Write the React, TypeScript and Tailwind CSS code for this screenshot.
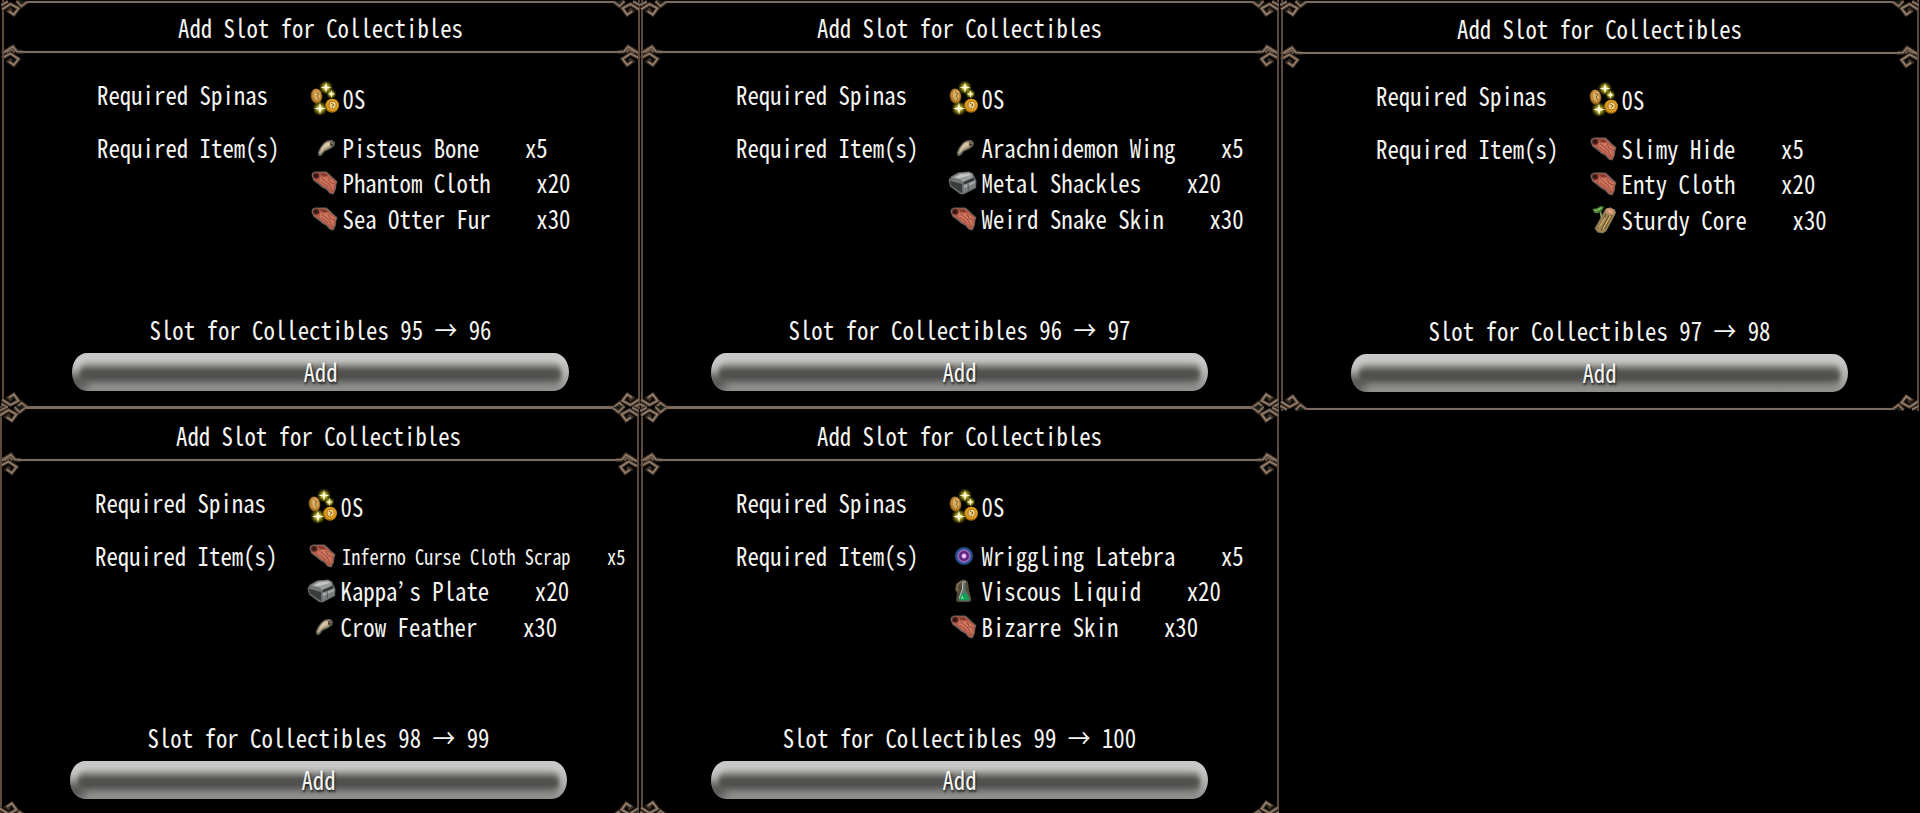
import type { ReactNode } from 'react';
import clsx from 'clsx';

type IconName = 'bone' | 'cloth' | 'metal' | 'wood' | 'orb' | 'flask';

interface RequiredItem {
  icon: IconName;
  name: string;
  count: number;
  small?: boolean;
}

interface SlotPanelData {
  from: number;
  items: RequiredItem[];
}

const topRow: SlotPanelData[] = [
  {
    from: 95,
    items: [
      { icon: 'bone', name: 'Pisteus Bone', count: 5 },
      { icon: 'cloth', name: 'Phantom Cloth', count: 20 },
      { icon: 'cloth', name: 'Sea Otter Fur', count: 30 },
    ],
  },
  {
    from: 96,
    items: [
      { icon: 'bone', name: 'Arachnidemon Wing', count: 5 },
      { icon: 'metal', name: 'Metal Shackles', count: 20 },
      { icon: 'cloth', name: 'Weird Snake Skin', count: 30 },
    ],
  },
  {
    from: 97,
    items: [
      { icon: 'cloth', name: 'Slimy Hide', count: 5 },
      { icon: 'cloth', name: 'Enty Cloth', count: 20 },
      { icon: 'wood', name: 'Sturdy Core', count: 30 },
    ],
  },
];

const bottomRow: SlotPanelData[] = [
  {
    from: 98,
    items: [
      { icon: 'cloth', name: 'Inferno Curse Cloth Scrap', count: 5, small: true },
      { icon: 'metal', name: 'Kappa’s Plate', count: 20 },
      { icon: 'bone', name: 'Crow Feather', count: 30 },
    ],
  },
  {
    from: 99,
    items: [
      { icon: 'orb', name: 'Wriggling Latebra', count: 5 },
      { icon: 'flask', name: 'Viscous Liquid', count: 20 },
      { icon: 'cloth', name: 'Bizarre Skin', count: 30 },
    ],
  },
];

function Label({ children, className }: { children: ReactNode; className?: string }) {
  return (
    <span className={clsx('inline-block -translate-y-[.5px] scale-y-[1.14] whitespace-pre', className)}>
      {children}
    </span>
  );
}

// The curly apostrophe is narrower than the other glyphs, so pad it to a full cell
function ItemName({ name }: { name: string }) {
  const [head, tail] = name.split('’');
  if (tail === undefined) return <>{name}</>;
  return (
    <>
      {head}
      <span className="tracking-[5.6px]">’</span>
      {tail}
    </>
  );
}

function Sparkle({ x, y, r }: { x: number; y: number; r: number }) {
  return (
    <g transform={`translate(${x} ${y}) scale(${r})`}>
      <circle r="1.05" fill="url(#spark)" />
      <path d="M0-.8 .16-.16 .8 0 .16 .16 0 .8-.16 .16-.8 0-.16-.16Z" fill="#fffde0" />
    </g>
  );
}

function CoinIcon() {
  return (
    <svg className="block h-[36px] w-[32px]" viewBox="0 0 32 36">
      <defs>
        <radialGradient id="spark">
          <stop offset="0" stopColor="#fff9a0" />
          <stop offset=".45" stopColor="#c9bd22" stopOpacity=".75" />
          <stop offset="1" stopColor="#6b6400" stopOpacity="0" />
        </radialGradient>
      </defs>
      <ellipse cx="7.5" cy="16" rx="5.8" ry="7.6" fill="#8f5f18" transform="rotate(-8 7.5 16)" />
      <ellipse cx="7.8" cy="15.5" rx="4.8" ry="6.6" fill="#c08a35" transform="rotate(-8 7.5 16)" />
      <ellipse cx="8.2" cy="15.2" rx="3" ry="4.6" fill="#d8b06a" transform="rotate(-8 7.5 16)" />
      <path d="M7 12l3 2-2 2 2 3" fill="none" stroke="#8a5c1c" strokeWidth="1" />
      <ellipse cx="23" cy="25.8" rx="7" ry="7" fill="#a86b0a" />
      <ellipse cx="23.4" cy="25" rx="6.2" ry="6.2" fill="#dc9d1e" />
      <ellipse cx="23.4" cy="25" rx="4.2" ry="4.4" fill="#b98228" />
      <ellipse cx="23.6" cy="25" rx="3" ry="3.2" fill="#ecd08a" />
      <path d="M22 23l3 2-2 2" fill="none" stroke="#8a5c1c" strokeWidth="1" />
      <Sparkle x={17} y={7.5} r={7} />
      <Sparkle x={22.4} y={14} r={5} />
      <Sparkle x={11} y={28.5} r={7.5} />
    </svg>
  );
}

function ItemIcon({ name }: { name: IconName }) {
  switch (name) {
    case 'bone':
      return (
        <svg className="ml-[8px] block h-[18px] w-[19px]" viewBox="0 0 19 18">
          <path d="M10 1.5 15 .8 18 3.2 17.4 7 13.5 10 8 12.5 4.5 16.8 1.4 17 .8 13.5 3 8.5 6.5 4Z" fill="#5a5b57" />
          <path d="M9.5 3 14 2 16.3 4 16 6.5 12.5 9 7 11.5 3 16 2 13.5 4 9 7 5Z" fill="#ac9a7b" />
          <path d="M10 3.5 13 3.4 13 6.5 7 9.5 3.5 14 5 9 7.5 5.5Z" fill="#d5c6a4" />
          <path d="M14 2.5 16.4 4.2 15.8 6.5 14 7.5 12.8 5Z" fill="#443b2d" />
          <path d="M14.2 4.2 16 4.6" stroke="#b5a482" strokeWidth=".8" />
        </svg>
      );
    case 'cloth':
      return (
        <svg className="ml-[2px] block h-[24px] w-[27px]" viewBox="0 0 27 24">
          <path d="M4 .5 15.5 .5 19 3.5 21.5 6 26.5 10.5 25.3 14 25 18 22.5 23.5 18.5 22.5 15 18.5 11 16.5 7 13 2.5 9.8 .5 5 1 2Z" fill="#67605b" />
          <path d="M4.5 1.5 15 1.6 18 4 20.8 7 25.5 11 24.3 14 24 18 22 22.4 19 21.4 16 17.8 12 15.6 8 12 3.5 8.9 1.6 5 2 2.8Z" fill="#b75e4a" />
          <path d="M8 2.2 14.8 2.5 17 5 12 5.4Z" fill="#85392f" />
          <path d="M9 6 17 6 20 8.8 24.5 11.3 22.5 14 22 20 17 16 12.5 14 9 11Z" fill="#cd745d" />
          <path d="M10 6.5 18 13 21.8 21M10 10.5 17 15.5M17 6.5 19 11.5 24 13" fill="none" stroke="#8f4235" strokeWidth=".8" />
          <ellipse cx="5.2" cy="4.8" rx="3.2" ry="3" fill="#552421" />
          <ellipse cx="5" cy="4.8" rx="1.4" ry="1.3" fill="#24100f" />
        </svg>
      );
    case 'metal':
      return (
        <svg className="block h-[24px] w-[29px]" viewBox="0 0 29 24">
          <path d="M10 1.5 21 .5 25 2.5 28.5 10 28 17 15.5 23.5 12 23 2 15.5 .5 9 3 5.5Z" fill="#686b6b" />
          <path d="M11 2.5 21 1.6 24 3 25 7 15 11 5 10 4 6.5Z" fill="#999d9d" />
          <path d="M12 3.4 21 2.6 23 4 11 7.2 7 6.4Z" fill="#c3c6c4" />
          <path d="M4 6.5 13 8.5 15 12.5 3 10Z" fill="#747879" />
          <path d="M15 11.5 25.5 6.5 26.5 9 17 13.5Z" fill="#353838" />
          <path d="M2 9.8 14 13.2 14 22 3 14.5Z" fill="#393c3d" />
          <path d="M15 14 27.5 9 27 16 15.5 22.3Z" fill="#7b7f7f" />
          <path d="M16 14.5 27 10 27 12 16 17Z" fill="#a9acac" />
          <path d="M20 12.5 20.5 19.5" stroke="#525656" strokeWidth="1" />
        </svg>
      );
    case 'wood':
      return (
        <svg className="ml-[4px] block h-[28px] w-[25px]" viewBox="0 0 25 28">
          <path d="M13 3.5 18 1.2 23 3.5 24 7 14.5 25 11 27.5 5.5 26.5 2.5 22.5Z" fill="#77705a" />
          <path d="M13.5 5 23 8 14 24 10.5 26.4 6 25.4 3.8 22.4Z" fill="#a28550" />
          <path d="M14 8 6 22.5M17 9.5 9 24.5M20 9 12.5 23" stroke="#6a5230" strokeWidth="1.1" />
          <path d="M12.5 12 7 21.5M18.5 10 11 23" stroke="#d1b57b" strokeWidth="1.1" />
          <ellipse cx="18.2" cy="5.4" rx="5" ry="3.2" fill="#c28f68" transform="rotate(22 18.2 5.4)" />
          <ellipse cx="18.2" cy="5.2" rx="2.8" ry="1.7" fill="#dda883" transform="rotate(22 18.2 5.4)" />
          <path d="M9.5 11.5 8.5 6" stroke="#91a266" strokeWidth="1.6" />
          <path d="M.5 3 5.5 2 8 .2 12 .6 10 5 5.5 7.4 2 6.6Z" fill="#477e31" />
          <path d="M2.5 4.5 6 4 9.5 1.5" fill="none" stroke="#9bd072" strokeWidth="1.1" />
        </svg>
      );
    case 'orb':
      return (
        <svg className="ml-[6px] block h-[22px] w-[20px]" viewBox="0 0 20 22">
          <defs>
            <radialGradient id="orb">
              <stop offset="0" stopColor="#fff" />
              <stop offset=".14" stopColor="#f2c6ff" />
              <stop offset=".27" stopColor="#8b3ca6" />
              <stop offset=".42" stopColor="#452065" />
              <stop offset=".58" stopColor="#9c6ab8" />
              <stop offset=".72" stopColor="#3b50a0" />
              <stop offset=".86" stopColor="#104b82" />
              <stop offset="1" stopColor="#04172b" stopOpacity="0" />
            </radialGradient>
          </defs>
          <circle cx="10" cy="11" r="9.8" fill="url(#orb)" />
        </svg>
      );
    case 'flask':
      return (
        <svg className="ml-[6px] block h-[24px] w-[19px]" viewBox="0 0 19 24">
          <path d="M7 1 11 .6 14 3 15 11 17.5 21 16 23 4 23.2 2 21.5 3 14 1 11 2 5Z" fill="#544a3a" />
          <path d="M5 4Q1.5 7 4 12M5 4 8 3" fill="none" stroke="#8b7657" strokeWidth="1.2" />
          <path d="M8.2 3.5 11.5 3.5 11.5 10 16 20 14.8 21.8 5.5 21.8 4.5 20 8.2 10Z" fill="#5c6c66" />
          <path d="M8.7 4 8.7 10 5 19.5" fill="none" stroke="#bfc9c2" strokeWidth="1" />
          <path d="M7.5 15Q10.5 13.5 12.8 14.5L15.2 20 14.2 21.2 6 21.2 5.4 19.5Z" fill="#179c56" />
          <path d="M8 16 7 20 10 19.5Z" fill="#70e0a0" />
          <path d="M8.3 3H11.8" stroke="#b5b0a5" strokeWidth="1.4" />
        </svg>
      );
  }
}

// Hooked ornament where two frame lines meet, drawn for the top left corner
function Corner({ className }: { className: string }) {
  return (
    <svg className={clsx('absolute h-[18px] w-[28px]', className)} viewBox="0 0 28 18" fill="none">
      <path d="M16 0 20.5 0 25 2 20.5 6.5 16.5 2.5Z" fill="#101a17" />
      <g stroke="#3a2e25" strokeWidth="4">
        <path d="M1 9.5 9.5 4 17.5 8.3 12.8 14.6 7.8 11.2 11 8.6" />
        <path d="M0 5 7 1.5M15.5 1 20.5 6.2 26 2" />
      </g>
      <g stroke="#917b69" strokeWidth="1.9">
        <path d="M1 9.5 9.5 4 17.5 8.3 12.8 14.6 7.8 11.2" />
        <path d="M0 5 7 1.5M15.5 1 20.5 6.2 26 2" strokeWidth="1.5" />
      </g>
    </svg>
  );
}

// Ornament at the ends of the line under the title, drawn for the left end
function Knot({ className }: { className: string }) {
  return (
    <svg className={clsx('absolute h-[24px] w-[22px]', className)} viewBox="0 0 22 24" fill="none">
      <g stroke="#3a2e25" strokeWidth="4">
        <path d="M1 9.5 8 5 12 2.5 16 7.5 22 8" />
        <path d="M1 14 9.5 9.5 17.5 15 12.8 21 7.8 17.5 11 15" />
      </g>
      <path d="M5 8.5 11.5 5.5 13.5 8.5" stroke="#6b5747" strokeWidth="2.4" />
      <g stroke="#917b69" strokeWidth="1.9">
        <path d="M1 9.5 8 5 12 2.5 16 7.5 22 8" strokeWidth="1.6" />
        <path d="M1 14 9.5 9.5 17.5 15 12.8 21 7.8 17.5" />
      </g>
    </svg>
  );
}

function Frame({ className }: { className: string }) {
  return (
    <div className={clsx('pointer-events-none absolute left-0', className)}>
      <div className="absolute inset-y-0 left-px w-[2px] bg-[#5d4a3d]" />
      <div className="absolute inset-y-0 right-0 w-[2px] bg-[#5d4a3d]" />
      <div className="absolute inset-x-[24px] top-px h-[2px] bg-[#7b6b60] shadow-[0_0_1px_#5b4b40]" />
      <div className="absolute inset-x-[24px] bottom-px h-[2px] bg-[#7b6b60] shadow-[0_0_1px_#5b4b40]" />
      <Corner className="left-0 top-0" />
      <Corner className="right-0 top-0 -scale-x-100" />
      <Corner className="bottom-0 left-0 -scale-y-100" />
      <Corner className="bottom-0 right-0 -scale-100" />
    </div>
  );
}

function AddButton() {
  return (
    <button className="relative mx-auto flex h-[38px] w-[497px] items-center justify-center overflow-hidden rounded-[15px/19px] bg-linear-to-b from-[#c8c8c6] from-20% via-[#b4b4b2] via-50% to-[#8f8f8d]">
      <span className="absolute -left-2 bottom-0 h-[17px] w-[22px] bg-[#3c3c3a] opacity-70 blur-[4px]" />
      <span className="absolute bottom-[2px] left-[8px] right-[8px] top-[7px] rounded-[12px] bg-linear-to-b from-[#50504e]/0 via-[#4d4d4b] via-50% to-[#8f8f8d]/0 blur-[2px]" />
      <span className="absolute bottom-[12px] left-[11px] right-[11px] top-[17px] rounded-full bg-[#4e4e4c] blur-[3px]" />
      <Label className="relative [text-shadow:1px_2px_2px_#222]">Add</Label>
    </button>
  );
}

interface SlotPanelProps extends SlotPanelData {
  className?: string;
  frame: string;
}

function SlotPanel({ from, items, className, frame }: SlotPanelProps) {
  return (
    <section className={clsx('relative flex w-[639px] shrink-0 flex-col', className)}>
      <header className="relative flex h-[56px] items-center justify-center">
        <Label>Add Slot for Collectibles</Label>
        <div className="absolute inset-x-[18px] top-[51px] h-[2px] bg-[#7b6b60] shadow-[0_0_1px_#5b4b40]" />
        <Knot className="left-0 top-[44px]" />
        <Knot className="right-0 top-[44px] -scale-x-100" />
      </header>

      <div className="mt-[22px] flex h-[40px] pl-[96px]">
        <div className="flex h-[34px] w-[212px] items-center">
          <Label>Required Spinas</Label>
        </div>
        <div className="flex items-center">
          <div className="w-[33.5px]">
            <CoinIcon />
          </div>
          <Label className="mt-px">0S</Label>
        </div>
      </div>

      <div className="mt-[12px] flex h-[108px] pl-[96px]">
        <div className="flex h-[35px] w-[212px] items-center">
          <Label>Required Item(s)</Label>
        </div>
        <ul className="flex flex-col">
          {items.map(item => (
            <li key={item.name} className="flex h-[35.6px] items-center">
              <div className="w-[33.5px]">
                <ItemIcon name={item.icon} />
              </div>
              <Label className={clsx(item.small && 'pl-[1.5px] text-[18.3px]')}>
                <ItemName name={item.name} />
                {`    x${item.count}`}
              </Label>
            </li>
          ))}
        </ul>
      </div>

      <div className="mt-[77px] flex h-[30px] items-center justify-center">
        <Label>{`Slot for Collectibles ${from} → ${from + 1}`}</Label>
      </div>
      <div className="mt-[8px]">
        <AddButton />
      </div>

      <Frame className={frame} />
    </section>
  );
}

export default function App() {
  return (
    <div className='h-[813px] w-[1920px] overflow-hidden bg-black font-["Noto_Sans_Mono_CJK_JP","Noto_Sans_CJK_JP",monospace] text-[22.8px] leading-[30px] text-[#f4f4f2] [font-kerning:none]'>
      <div className="flex h-[407px] pl-px">
        <SlotPanel {...topRow[0]} frame="right-0 top-0 h-[409px]" />
        <SlotPanel {...topRow[1]} frame="right-0 top-0 h-[409px]" />
        <SlotPanel {...topRow[2]} className="ml-px mt-px" frame="right-0 -top-px h-[411px]" />
      </div>
      <div className="flex h-[406px]">
        <SlotPanel {...bottomRow[0]} className="-ml-px mt-px" frame="-right-px -top-[2px] h-[412px]" />
        <SlotPanel {...bottomRow[1]} className="ml-[2px] mt-px" frame="right-0 -top-[2px] h-[411px]" />
      </div>
    </div>
  );
}
